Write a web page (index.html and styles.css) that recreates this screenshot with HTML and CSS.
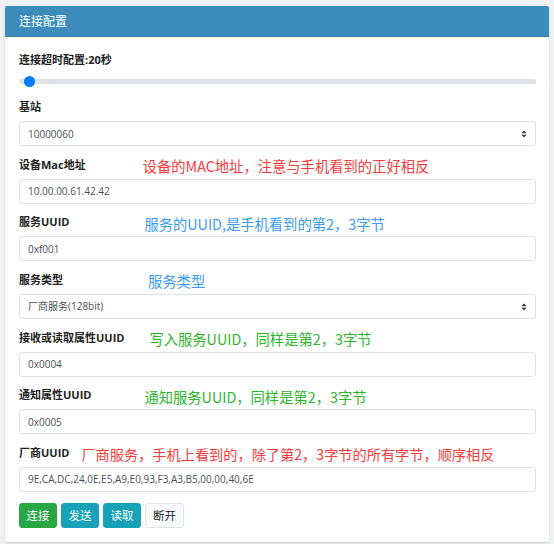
FILE: index.html
```html
<!DOCTYPE html>
<html lang="zh-CN">
<head>
<meta charset="utf-8">
<title>连接配置</title>
<link rel="stylesheet" href="styles.css">
</head>
<body>
<div class="card">
  <div class="card-header">连接配置</div>
  <div class="card-body">
    <div class="field field-slider">
      <div class="label-row"><label class="label">连接超时配置:20秒</label></div>
      <input class="range" type="range" min="0" max="1900" value="20">
    </div>

    <div class="field">
      <div class="label-row"><label class="label">基站</label></div>
      <div class="select-wrap">
        <select class="control select"><option>10000060</option></select>
        <svg class="select-arrow" width="6" height="8" viewBox="0 0 6 8"><path d="M3 0.5 L5.6 3.2 H0.4 Z M3 7.5 L5.6 4.8 H0.4 Z" fill="#343a40"/></svg>
      </div>
    </div>

    <div class="field">
      <div class="label-row"><label class="label">设备Mac地址</label><span class="note note-red note-mac">设备的MAC地址，注意与手机看到的正好相反</span></div>
      <input class="control" type="text" value="10.00.00.61.42.42">
    </div>

    <div class="field">
      <div class="label-row"><label class="label">服务UUID</label><span class="note note-blue note-uuid">服务的UUID,是手机看到的第2，3字节</span></div>
      <input class="control" type="text" value="0xf001">
    </div>

    <div class="field">
      <div class="label-row"><label class="label">服务类型</label><span class="note note-blue note-type">服务类型</span></div>
      <div class="select-wrap">
        <select class="control select"><option>厂商服务(128bit)</option></select>
        <svg class="select-arrow" width="6" height="8" viewBox="0 0 6 8"><path d="M3 0.5 L5.6 3.2 H0.4 Z M3 7.5 L5.6 4.8 H0.4 Z" fill="#343a40"/></svg>
      </div>
    </div>

    <div class="field">
      <div class="label-row"><label class="label">接收或读取属性UUID</label><span class="note note-green note-read">写入服务UUID，同样是第2，3字节</span></div>
      <input class="control" type="text" value="0x0004">
    </div>

    <div class="field">
      <div class="label-row"><label class="label">通知属性UUID</label><span class="note note-green note-notify">通知服务UUID，同样是第2，3字节</span></div>
      <input class="control" type="text" value="0x0005">
    </div>

    <div class="field field-last">
      <div class="label-row"><label class="label">厂商UUID</label><span class="note note-red note-vendor">厂商服务，手机上看到的，除了第2，3字节的所有字节，顺序相反</span></div>
      <input class="control" type="text" value="9E,CA,DC,24,0E,E5,A9,E0,93,F3,A3,B5,00,00,40,6E">
    </div>

    <div class="buttons">
      <button class="btn btn-success">连接</button>
      <button class="btn btn-info">发送</button>
      <button class="btn btn-info">读取</button>
      <button class="btn btn-light">断开</button>
    </div>
  </div>
</div>
</body>
</html>
```

FILE: styles.css
```css
* { box-sizing: border-box; }

html, body {
  margin: 0;
  padding: 0;
}

body {
  width: 554px;
  height: 544px;
  background: #eef0f3;
  font-family: "Open Sans", "Noto Sans CJK SC", sans-serif;
  overflow: hidden;
  padding: 6px 5px 0 5px;
}

.card {
  width: 544px;
  height: 536px;
  background: #fff;
  border-radius: 2px;
  box-shadow: 0 1px 2px rgba(0,0,0,0.15);
  overflow: hidden;
}

.card-header {
  height: 31px;
  background: #3c8dbc;
  border-bottom: 1px solid #367fa9;
  color: #fff;
  font-family: "Noto Sans CJK SC", sans-serif;
  font-size: 12px;
  line-height: 30px;
  padding-left: 14px;
}

.card-body {
  padding: 12px 13px 0 14px;
}

.field {
  margin-bottom: 7.67px;
}

.field-slider {
  margin-bottom: 7px;
}

.field-last {
  margin-bottom: 10.7px;
}

.label-row {
  display: flex;
  align-items: center;
  height: 20px;
  margin-bottom: 5px;
}

.field-slider .label-row {
  margin-bottom: 4px;
}

.label {
  font-family: "Open Sans", "Noto Sans CJK SC", sans-serif;
  font-weight: 700;
  font-size: 11px;
  color: #222;
  white-space: nowrap;
}

.note {
  font-family: "Noto Sans CJK SC", sans-serif;
  font-size: 14.3px;
  white-space: nowrap;
  position: relative;
  top: 2px;
}

.note-red { color: #f73b3b; }
.note-blue { color: #3a9cf0; }
.note-green { color: #2bb52b; }

.note-mac { margin-left: 57px; }
.note-uuid { margin-left: 75px; }
.note-type { margin-left: 85px; }
.note-read { margin-left: 25px; }
.note-notify { margin-left: 53px; }
.note-vendor { margin-left: 12px; font-size: 14.2px; }

.range {
  -webkit-appearance: none;
  appearance: none;
  display: block;
  width: 517px;
  height: 16px;
  margin: 0;
  padding: 0;
  background: transparent;
}

.range::-webkit-slider-runnable-track {
  height: 5px;
  background: #dee2e6;
  border-radius: 3px;
}

.range::-webkit-slider-thumb {
  -webkit-appearance: none;
  appearance: none;
  width: 11px;
  height: 11px;
  border-radius: 50%;
  background: #007bff;
  border: 0;
  margin-top: -3px;
}

.control {
  display: block;
  width: 517px;
  height: 25px;
  margin: 0;
  padding: 0 8px;
  border: 1px solid #dfe2e6;
  border-radius: 3px;
  background: #fff;
  font-family: "Open Sans", "Noto Sans CJK SC", sans-serif;
  font-size: 10px;
  color: #495057;
  outline: none;
}

.select-wrap {
  position: relative;
}

.select {
  -webkit-appearance: none;
  appearance: none;
  padding-right: 20px;
}

.select-arrow {
  position: absolute;
  right: 9px;
  top: 9px;
  pointer-events: none;
}

.buttons {
  display: flex;
  gap: 4px;
}

.btn {
  width: 38px;
  height: 25px;
  padding: 0;
  border: 1px solid transparent;
  border-radius: 3px;
  font-family: "Noto Sans CJK SC", sans-serif;
  font-size: 11.5px;
  color: #fff;
  cursor: pointer;
}

.btn-success { background: #28a745; border-color: #28a745; }
.btn-info { background: #17a2b8; border-color: #17a2b8; }
.btn-light { background: #f8f9fa; border-color: #e2e5e8; color: #212529; width: 39px; }
```
